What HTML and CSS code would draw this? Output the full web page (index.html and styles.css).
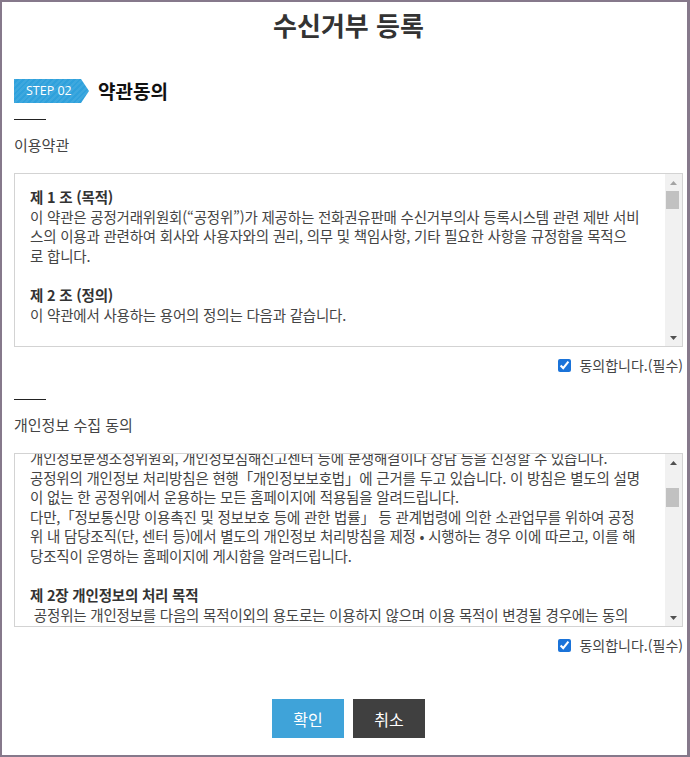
FILE: index.html
```html
<!DOCTYPE html>
<html lang="ko">
<head>
<meta charset="utf-8">
<title>수신거부 등록</title>
<link rel="stylesheet" href="styles.css">
</head>
<body>
<div class="frame">
  <h1 class="title">수신거부 등록</h1>

  <div class="step-head">
    <span class="step">STEP 02</span>
    <h2 class="step-title">약관동의</h2>
  </div>

  <section class="agree">
    <hr class="dash">
    <h3 class="label">이용약관</h3>
    <div class="box">
      <div class="box-text first">
        <div class="ln b">제 1 조 (목적)</div>
        <div class="ln">이 약관은 공정거래위원회(“공정위”)가 제공하는 전화권유판매 수신거부의사 등록시스템 관련 제반 서비</div>
        <div class="ln">스의 이용과 관련하여 회사와 사용자와의 권리, 의무 및 책임사항, 기타 필요한 사항을 규정함을 목적으</div>
        <div class="ln">로 합니다.</div>
        <div class="ln blank"></div>
        <div class="ln b">제 2 조 (정의)</div>
        <div class="ln">이 약관에서 사용하는 용어의 정의는 다음과 같습니다.</div>
      </div>
      <div class="sb">
        <div class="sb-btn"><svg width="7" height="4" viewBox="0 0 7 4"><path d="M0 4L3.5 0L7 4Z" fill="#a3a3a3"/></svg></div>
        <div class="sb-track"><div class="sb-thumb"></div></div>
        <div class="sb-btn"><svg width="7" height="4" viewBox="0 0 7 4"><path d="M0 0L7 0L3.5 4Z" fill="#505050"/></svg></div>
      </div>
    </div>
    <label class="check"><input type="checkbox" checked><span>동의합니다.(필수)</span></label>
  </section>

  <section class="agree second">
    <hr class="dash">
    <h3 class="label">개인정보 수집 동의</h3>
    <div class="box">
      <div class="box-text scrolled">
        <div class="inner">
          <div class="ln">개인정보분쟁조정위원회, 개인정보침해신고센터 등에 분쟁해결이나 상담 등을 신청할 수 있습니다.</div>
          <div class="ln">공정위의 개인정보 처리방침은 현행「개인정보보호법」에 근거를 두고 있습니다. 이 방침은 별도의 설명</div>
          <div class="ln">이 없는 한 공정위에서 운용하는 모든 홈페이지에 적용됨을 알려드립니다.</div>
          <div class="ln">다만,「정보통신망 이용촉진 및 정보보호 등에 관한 법률」 등 관계법령에 의한 소관업무를 위하여 공정</div>
          <div class="ln">위 내 담당조직(단, 센터 등)에서 별도의 개인정보 처리방침을 제정 • 시행하는 경우 이에 따르고, 이를 해</div>
          <div class="ln">당조직이 운영하는 홈페이지에 게시함을 알려드립니다.</div>
          <div class="ln blank"></div>
          <div class="ln b">제 2장 개인정보의 처리 목적</div>
          <div class="ln"> 공정위는 개인정보를 다음의 목적이외의 용도로는 이용하지 않으며 이용 목적이 변경될 경우에는 동의</div>
        </div>
      </div>
      <div class="sb">
        <div class="sb-btn"><svg width="7" height="4" viewBox="0 0 7 4"><path d="M0 4L3.5 0L7 4Z" fill="#505050"/></svg></div>
        <div class="sb-track"><div class="sb-thumb mid"></div></div>
        <div class="sb-btn"><svg width="7" height="4" viewBox="0 0 7 4"><path d="M0 0L7 0L3.5 4Z" fill="#505050"/></svg></div>
      </div>
    </div>
    <label class="check"><input type="checkbox" checked><span>동의합니다.(필수)</span></label>
  </section>

  <div class="actions">
    <button class="btn ok" type="button">확인</button>
    <button class="btn cancel" type="button">취소</button>
  </div>
</div>
</body>
</html>
```

FILE: styles.css
```css
html, body {
  margin: 0;
  padding: 0;
  background: #fff;
}

body {
  font-family: "Noto Sans CJK KR", "Noto Sans", sans-serif;
  color: #444;
}

.frame {
  box-sizing: border-box;
  width: 690px;
  height: 757px;
  border: 2px solid #86798b;
  border-right-width: 3px;
  padding: 7px 4px 0 12px;
  background: #fff;
}

.title {
  margin: 0;
  font-size: 26px;
  line-height: 32px;
  font-weight: 700;
  color: #333;
  text-align: center;
}

.step-head {
  display: flex;
  align-items: center;
  gap: 9px;
  margin-top: 38px;
  height: 24px;
}

.step {
  box-sizing: border-box;
  width: 75px;
  height: 24px;
  padding-left: 12px;
  font-family: "Open Sans", "Noto Sans", sans-serif;
  font-size: 12.5px;
  line-height: 24px;
  color: #fff;
  background-color: #2fa1dc;
  background-image: repeating-linear-gradient(-45deg, rgba(255,255,255,0.07) 0 2px, rgba(255,255,255,0) 2px 4px);
  clip-path: polygon(0 0, calc(100% - 8px) 0, 100% 50%, calc(100% - 8px) 100%, 0 100%);
}

.step-title {
  margin: 0;
  font-size: 19px;
  line-height: 24px;
  font-weight: 700;
  color: #111;
}

.dash {
  margin: 16px 0 0;
  border: 0;
  width: 32px;
  height: 1px;
  background: #222;
}

.second .dash {
  margin-top: 24px;
}

.label {
  margin: 15px 0 0;
  font-size: 15px;
  line-height: 20px;
  font-weight: 400;
  color: #444;
}

.box {
  box-sizing: border-box;
  margin-top: 18px;
  height: 174px;
  border: 1px solid #d3d3d3;
  display: flex;
}

.box-text {
  flex: 1;
  min-width: 0;
  overflow: hidden;
  padding-left: 15px;
}

.box-text.first {
  padding-top: 13px;
}

.box-text.scrolled .inner {
  margin-top: -6px;
}

.ln {
  white-space: pre;
  font-size: 14.5px;
  line-height: 19.6px;
  letter-spacing: -0.2px;
  color: #444;
  height: 19.6px;
}

.ln.b {
  font-weight: 700;
  color: #333;
}

.sb {
  width: 17px;
  flex: none;
  display: flex;
  flex-direction: column;
  background: #f1f1f1;
}

.sb-btn {
  height: 17px;
  display: flex;
  align-items: center;
  justify-content: center;
}

.sb-btn svg {
  display: block;
}

.sb-track {
  flex: 1;
}

.sb-thumb {
  height: 18px;
  margin: 0 3px 0 1px;
  background: #c1c1c1;
}

.sb-thumb.mid {
  margin-top: 17px;
  height: 19px;
}

.check {
  display: flex;
  justify-content: flex-end;
  align-items: center;
  margin-top: 8px;
  height: 20px;
  font-size: 14px;
  color: #444;
}

.check input {
  margin: 0 8px 0 0;
  width: 13px;
  height: 13px;
  accent-color: #1a73d9;
}

.actions {
  display: flex;
  justify-content: center;
  gap: 9px;
  margin-top: 44px;
}

.btn {
  width: 72px;
  height: 39px;
  border: 0;
  padding: 0;
  font-family: inherit;
  font-size: 16px;
  color: #fff;
  cursor: pointer;
}

.btn.ok {
  background: #3fa3d9;
}

.btn.cancel {
  background: #404040;
}
```
